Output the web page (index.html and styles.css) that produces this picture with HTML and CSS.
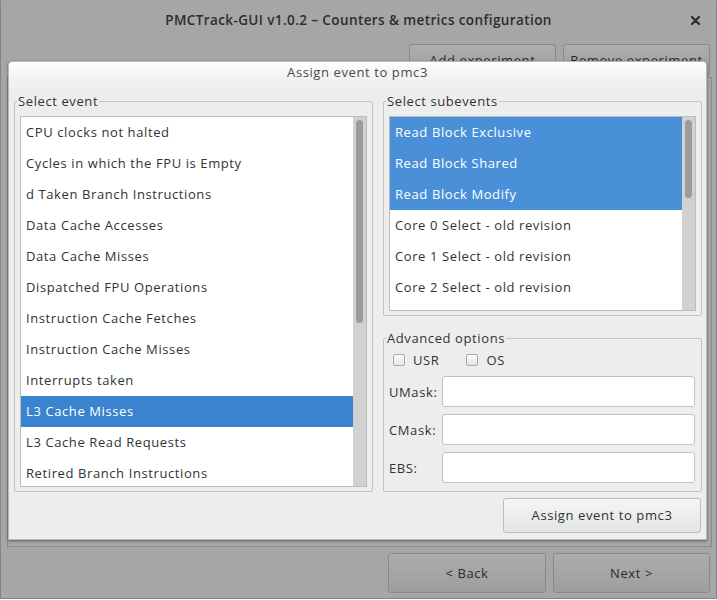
FILE: index.html
```html
<!DOCTYPE html>
<html>
<head>
<meta charset="utf-8">
<link rel="stylesheet" href="styles.css">
</head>
<body>
<div class="window">
  <div class="titlebar">
    <span class="title">PMCTrack-GUI v1.0.2 – Counters &amp; metrics configuration</span>
    <svg class="close" width="9" height="9" viewBox="0 0 9 9"><path d="M1 1L8 8M8 1L1 8" stroke="#2a2e30" stroke-width="2.2" stroke-linecap="round"/></svg>
  </div>
  <div class="toolbar">
    <div class="bgbtn top-btn">Add experiment</div>
    <div class="bgbtn top-btn">Remove experiment</div>
  </div>
  <div class="panel"></div>
  <div class="nav">
    <div class="bgbtn nav-btn">&lt; Back</div>
    <div class="bgbtn nav-btn">Next &gt;</div>
  </div>

  <div class="dialog">
    <div class="dlg-header">Assign event to pmc3</div>
    <div class="dlg-body">
      <div class="columns">
        <fieldset class="frame frame-events">
          <legend>Select event</legend>
          <div class="list list-events">
            <div class="items">
              <div class="item">CPU clocks not halted</div>
              <div class="item">Cycles in which the FPU is Empty</div>
              <div class="item">d Taken Branch Instructions</div>
              <div class="item">Data Cache Accesses</div>
              <div class="item">Data Cache Misses</div>
              <div class="item">Dispatched FPU Operations</div>
              <div class="item">Instruction Cache Fetches</div>
              <div class="item">Instruction Cache Misses</div>
              <div class="item">Interrupts taken</div>
              <div class="item sel-dark">L3 Cache Misses</div>
              <div class="item">L3 Cache Read Requests</div>
              <div class="item">Retired Branch Instructions</div>
            </div>
            <div class="trough"><div class="thumb thumb-events"></div></div>
          </div>
        </fieldset>
        <div class="right-col">
          <fieldset class="frame frame-sub">
            <legend>Select subevents</legend>
            <div class="list list-sub">
              <div class="items">
                <div class="item sel">Read Block Exclusive</div>
                <div class="item sel">Read Block Shared</div>
                <div class="item sel">Read Block Modify</div>
                <div class="item">Core 0 Select - old revision</div>
                <div class="item">Core 1 Select - old revision</div>
                <div class="item">Core 2 Select - old revision</div>
              </div>
              <div class="trough"><div class="thumb thumb-sub"></div></div>
            </div>
          </fieldset>
          <fieldset class="frame frame-adv">
            <legend>Advanced options</legend>
            <div class="checks">
              <label class="check"><span class="box"></span>USR</label>
              <label class="check"><span class="box"></span>OS</label>
            </div>
            <div class="field"><span class="flabel">UMask:</span><span class="input"></span></div>
            <div class="field"><span class="flabel">CMask:</span><span class="input"></span></div>
            <div class="field"><span class="flabel">EBS:</span><span class="input"></span></div>
          </fieldset>
        </div>
      </div>
      <div class="actions">
        <div class="btn">Assign event to pmc3</div>
      </div>
    </div>
  </div>
</div>
</body>
</html>
```
FILE: styles.css
```css
* { box-sizing: border-box; }
html, body { margin: 0; padding: 0; }
body {
  width: 717px;
  height: 600px;
  font-family: "Open Sans", "DejaVu Sans", sans-serif;
  font-size: 13px;
  letter-spacing: 0.6px;
  color: #2e3436;
  overflow: hidden;
}
.window {
  position: relative;
  width: 717px;
  height: 599px;
  background: #a6a6a6;
  border: 1px solid #858585;
  border-top-color: #a6a6a6;
  display: flex;
  flex-direction: column;
}
.titlebar {
  height: 43px;
  display: flex;
  align-items: center;
  justify-content: center;
  position: relative;
}
.title {
  font-weight: 600;
  font-size: 13.5px;
  letter-spacing: 0.4px;
  color: #2a2e30;
  margin-top: -6px;
}
.close {
  position: absolute;
  right: 16px;
  top: 15px;
}
.toolbar {
  display: flex;
  justify-content: flex-end;
  gap: 7px;
  padding-right: 6px;
}
.bgbtn {
  border: 1px solid #898989;
  border-radius: 3px;
  background: linear-gradient(#adadad, #9e9e9e);
  color: #2b2b2b;
  text-align: center;
}
.top-btn {
  width: 147px;
  height: 32px;
  line-height: 30px;
}
.panel {
  margin: 1px 4px 0 6px;
  height: 470px;
  border: 1px solid #8a8a8a;
}
.nav {
  margin-top: 6px;
  display: flex;
  justify-content: flex-end;
  gap: 7px;
  padding-right: 6px;
}
.nav-btn {
  width: 158px;
  height: 40px;
  line-height: 38px;
}
.nav-btn + .nav-btn { width: 157px; }

.dialog {
  position: absolute;
  left: 7px;
  top: 60px;
  width: 699px;
  height: 479px;
  background: #ededed;
  border: 1px solid #b9b9b9;
  border-radius: 4px 4px 0 0;
  box-shadow: 0 1px 3px rgba(0,0,0,0.45);
  display: flex;
  flex-direction: column;
}
.dlg-header {
  height: 31px;
  flex: none;
  padding-top: 2px;
  line-height: 17px;
  text-align: center;
  color: #464b4d;
  background: linear-gradient(#ffffff, #f4f4f4 40%, #ededed);
  border-radius: 4px 4px 0 0;
}
.dlg-body {
  flex: 1;
  min-height: 0;
  display: flex;
  flex-direction: column;
  padding: 0 4px 6px 5px;
}
.columns {
  flex: 1;
  min-height: 0;
  display: flex;
  gap: 10px;
}
.frame {
  margin: 0;
  border: 1px solid #c3c3c3;
  border-radius: 2px;
  padding: 6px 5px 4px 5px;
  min-width: 0;
}
.frame legend {
  padding: 0 1px;
  margin-left: -3px;
  line-height: 17px;
  color: #2e3436;
}
.frame-events {
  width: 359px;
}
.right-col {
  flex: 1;
  display: flex;
  flex-direction: column;
}
.frame-sub {
  flex: none;
}
.frame-adv {
  flex: 1;
  margin-top: 14px;
  padding: 3px 6px 5px 5px;
}
.list {
  display: flex;
  background: #fff;
  border: 1px solid #bcbcbc;
  overflow: hidden;
}
.list-events { height: 371px; }
.list-sub { height: 195px; }
.items {
  flex: 1;
  overflow: hidden;
}
.item {
  height: 31px;
  line-height: 31px;
  padding-left: 5px;
  white-space: nowrap;
}
.sel { background: #4a90d9; color: #fff; }
.sel-dark { background: #3a83ce; color: #fff; }
.trough {
  width: 13px;
  background: #d1d1d1;
  padding: 3px 3px;
}
.thumb {
  width: 7px;
  background: #9c9c9c;
  border-radius: 4px;
}
.thumb-events { height: 203px; }
.thumb-sub { height: 78px; }

.checks {
  display: flex;
  height: 19px;
  align-items: center;
  padding-left: 4px;
}
.check {
  display: flex;
  align-items: center;
}
.check + .check { margin-left: 27px; }
.box {
  width: 12px;
  height: 12px;
  border: 1px solid #a9a9a9;
  border-radius: 2px;
  background: linear-gradient(#fbfbfb, #e6e6e6);
  margin-right: 8px;
}
.field {
  display: flex;
  align-items: center;
  margin-top: 7px;
}
.flabel {
  width: 53px;
}
.input {
  flex: 1;
  height: 31px;
  background: #fff;
  border: 1px solid #c2c2c2;
  border-radius: 3px;
}
.actions {
  display: flex;
  justify-content: flex-end;
  margin-top: 6px;
  padding-right: 1px;
}
.btn {
  width: 198px;
  height: 35px;
  line-height: 33px;
  text-align: center;
  border: 1px solid #bdbdbd;
  border-radius: 3px;
  background: linear-gradient(#f6f6f6, #e3e3e3);
  color: #2e3436;
}
```
